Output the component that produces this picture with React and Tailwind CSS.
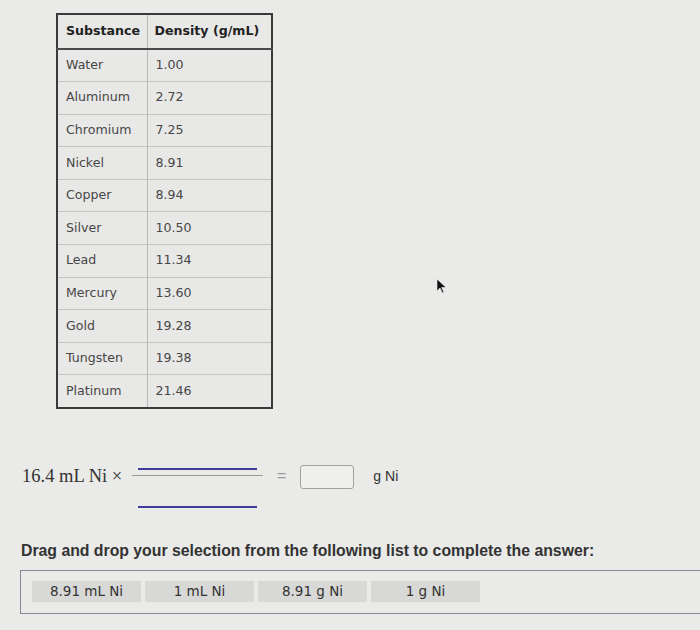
import React from 'react'

const rows = [
  ['Water', '1.00'],
  ['Aluminum', '2.72'],
  ['Chromium', '7.25'],
  ['Nickel', '8.91'],
  ['Copper', '8.94'],
  ['Silver', '10.50'],
  ['Lead', '11.34'],
  ['Mercury', '13.60'],
  ['Gold', '19.28'],
  ['Tungsten', '19.38'],
  ['Platinum', '21.46'],
]

const choices = ['8.91 mL Ni', '1 mL Ni', '8.91 g Ni', '1 g Ni']

export default function App() {
  return (
    <div className="relative w-[700px] h-[630px] overflow-hidden bg-[#eaeae8] font-['DejaVu_Sans',sans-serif]">
      {/* density table */}
      <div className="pt-[13px] pl-[56px]">
        <table className="w-[217px] border-collapse border-2 border-[#3a3a3a] bg-[#e8e8e6] text-[12.6px]">
          <thead>
            <tr className="h-[35px] border-b-2 border-[#4a4a4a] text-[#222]">
              <th className="w-[90px] border-r border-[#b8b8b8] pl-[8px] text-left font-bold">Substance</th>
              <th className="pl-[7px] text-left font-bold">Density (g/mL)</th>
            </tr>
          </thead>
          <tbody>
            {rows.map(([name, value]) => (
              <tr key={name} className="h-[32.6px] border-b border-[#c4c4c2] text-[#474747]">
                <td className="border-r border-[#b8b8b8] pl-[8px]">{name}</td>
                <td className="pl-[8px]">{value}</td>
              </tr>
            ))}
          </tbody>
        </table>
      </div>

      {/* equation */}
      <div className="mt-[52px] flex items-start h-[50px]">
        <div className="w-[132px] pl-[22px] leading-[30px] text-[18.5px] text-[#333] font-['Liberation_Serif',serif] whitespace-nowrap">
          16.4 mL Ni ×
        </div>
        <div className="w-[131px] pt-[7px] flex flex-col">
          <div className="mx-[6px] h-[2px] bg-[#3f3c9c]" />
          <div className="mt-[5px] h-[1.5px] bg-[#9a9a98]" />
          <div className="mx-[6px] mt-[30px] h-[2px] bg-[#3f3c9c]" />
        </div>
        <div className="ml-[14px] leading-[30px] text-[16px] text-[#9a9a9a] font-['Liberation_Sans',sans-serif]">=</div>
        <div className="ml-[14px] mt-[4px] w-[54px] h-[24px] rounded-[3px] border border-[#a2a2a0] bg-[#efefed]" />
        <div className="ml-[19px] leading-[30px] text-[14px] text-[#333] font-['Liberation_Sans',sans-serif]">g Ni</div>
      </div>

      {/* drag and drop */}
      <div className="mt-[31px] pl-[21px] leading-[18px] text-[15.8px] font-bold text-[#333] font-['Liberation_Sans',sans-serif] whitespace-nowrap">
        Drag and drop your selection from the following list to complete the answer:
      </div>
      <div className="mt-[10px] ml-[20px] w-[700px] h-[44px] border-y-[1.5px] border-l-[1.5px] border-[#86869c] flex items-center gap-[4px] pl-[11px]">
        {choices.map(c => (
          <div key={c} className="w-[109px] h-[21px] bg-[#d8d8d6] flex items-center justify-center text-[13.5px] text-[#333]">
            {c}
          </div>
        ))}
      </div>

      {/* mouse pointer */}
      <svg className="absolute left-[436px] top-[278px]" width="12" height="16" viewBox="0 0 12 16">
        <path d="M1 1 L1 13 L4 10 L6.5 15 L8 14.3 L5.6 9.5 L10 9.5 Z" fill="#111" stroke="#eee" strokeWidth="0.6" />
      </svg>
    </div>
  )
}
